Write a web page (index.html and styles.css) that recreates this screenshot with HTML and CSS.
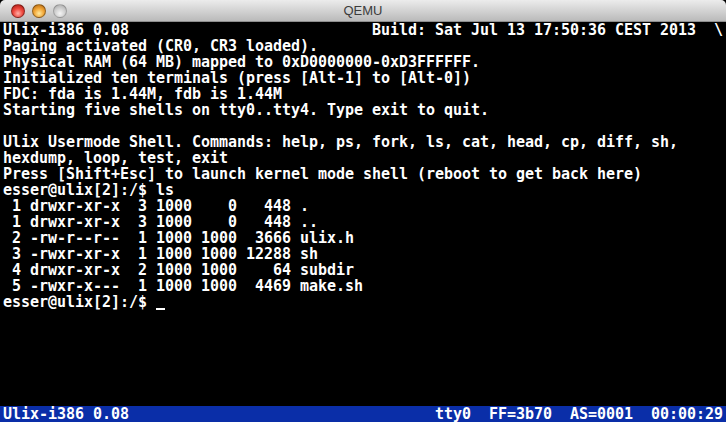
FILE: index.html
```html
<!DOCTYPE html>
<html lang="en">
<head>
    <meta charset="UTF-8">
    <meta name="viewport" content="width=device-width, initial-scale=1.0">
    <title>QEMU</title>
    <link rel="stylesheet" href="styles.css">
</head>
<body>
    <div class="window">
        <div class="titlebar">
            <div class="lights">
                <span class="light close"></span>
                <span class="light minimize"></span>
                <span class="light zoom"></span>
            </div>
            <div class="title">QEMU</div>
        </div>
        <div class="screen">
            <div class="row split"><span>Ulix-i386 0.08</span><span>Build: Sat Jul 13 17:50:36 CEST 2013  \</span></div>
            <div class="row">Paging activated (CR0, CR3 loaded).</div>
            <div class="row">Physical RAM (64 MB) mapped to 0xD0000000-0xD3FFFFFF.</div>
            <div class="row">Initialized ten terminals (press [Alt-1] to [Alt-0])</div>
            <div class="row">FDC: fda is 1.44M, fdb is 1.44M</div>
            <div class="row">Starting five shells on tty0..tty4. Type exit to quit.</div>
            <div class="row"> </div>
            <div class="row">Ulix Usermode Shell. Commands: help, ps, fork, ls, cat, head, cp, diff, sh,</div>
            <div class="row">hexdump, loop, test, exit</div>
            <div class="row">Press [Shift+Esc] to launch kernel mode shell (reboot to get back here)</div>
            <div class="row">esser@ulix[2]:/$ ls</div>
            <div class="row"> 1 drwxr-xr-x  3 1000    0   448 .</div>
            <div class="row"> 1 drwxr-xr-x  3 1000    0   448 ..</div>
            <div class="row"> 2 -rw-r--r--  1 1000 1000  3666 ulix.h</div>
            <div class="row"> 3 -rwxr-xr-x  1 1000 1000 12288 sh</div>
            <div class="row"> 4 drwxr-xr-x  2 1000 1000    64 subdir</div>
            <div class="row"> 5 -rwxr-x---  1 1000 1000  4469 make.sh</div>
            <div class="row">esser@ulix[2]:/$ <span class="cursor"></span></div>
            <div class="blank"></div>
            <div class="row split status"><span>Ulix-i386 0.08</span><span>tty0  FF=3b70  AS=0001  00:00:29</span></div>
        </div>
    </div>
</body>
</html>
```

FILE: styles.css
```css
body {
    margin: 0;
    background: #000;
    font-family: "Liberation Sans", Arial, sans-serif;
}
.window {
    width: 726px;
    height: 422px;
    display: flex;
    flex-direction: column;
}
.titlebar {
    height: 22px;
    flex: none;
    display: flex;
    align-items: center;
    position: relative;
    border-radius: 5px 5px 0 0;
    background: linear-gradient(#ececec, #d3d3d3 50%, #bababa);
    box-sizing: border-box;
    border-bottom: 1px solid #8e8e8e;
}
.lights {
    display: flex;
    gap: 7px;
    padding-left: 11px;
}
.light {
    width: 14px;
    height: 14px;
    border-radius: 50%;
    box-sizing: border-box;
    border: 1px solid rgba(0, 0, 0, 0.35);
}
.close {
    background: radial-gradient(circle at 50% 70%, #ffb0a8 0, #ef4a40 45%, #a3120c 100%);
}
.minimize {
    background: radial-gradient(circle at 50% 70%, #ffe9a0 0, #f3a93a 45%, #b0610a 100%);
}
.zoom {
    background: radial-gradient(circle at 50% 70%, #f4f4f4 0, #cfcfcf 50%, #a4a4a4 100%);
    border-color: rgba(0, 0, 0, 0.2);
}
.title {
    position: absolute;
    left: 0;
    right: 0;
    text-align: center;
    font-size: 13px;
    color: #3c3c3c;
    pointer-events: none;
}
.screen {
    flex: 1;
    padding: 0 3px;
    font-family: "DejaVu Sans Mono", "Liberation Mono", monospace;
    font-weight: bold;
    font-size: 15px;
    letter-spacing: -0.03px;
    line-height: 16px;
    color: #fff;
    display: flex;
    flex-direction: column;
}
.row {
    height: 16px;
    white-space: pre;
}
.split {
    display: flex;
    justify-content: space-between;
}
.blank {
    flex: 1;
}
.status {
    background: #0a2ea8;
    margin: 0 -3px;
    padding: 0 3px;
}
.cursor {
    display: inline-block;
    width: 9px;
    height: 16px;
    vertical-align: top;
    background: linear-gradient(transparent 14px, #fff 14px, #fff 16px);
}
```
